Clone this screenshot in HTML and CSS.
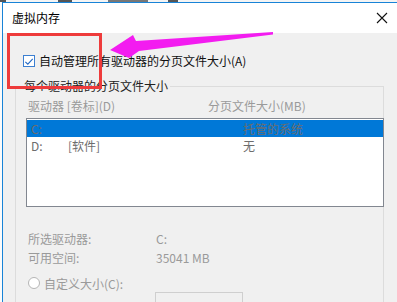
FILE: index.html
```html
<!DOCTYPE html>
<html lang="zh-CN">

<head>
  <meta charset="UTF-8">
  <title>虚拟内存</title>
  <link rel="stylesheet" href="styles.css">
</head>

<body>
  <div class="behind">
    <span class="frag f1"></span>
    <span class="frag f2"></span>
    <span class="frag f3"></span>
    <span class="frag f4"></span>
  </div>

  <div class="dialog">
    <div class="titlebar">
      <span class="title">虚拟内存</span>
      <svg class="close" width="12" height="12" viewBox="0 0 12 12">
        <path d="M1 1 L11 11 M11 1 L1 11" stroke="#111" stroke-width="1.1" fill="none" />
      </svg>
    </div>

    <div class="content">
      <label class="auto">
        <span class="checkbox">
          <svg width="11" height="11" viewBox="0 0 11 11">
            <path d="M1.5 5.8 L4.2 8.4 L9.6 2.6" stroke="#2168c4" stroke-width="1.2" fill="none" />
          </svg>
        </span>
        自动管理所有驱动器的分页文件大小(A)
      </label>

      <fieldset class="group">
        <legend>每个驱动器的分页文件大小</legend>

        <div class="heads">
          <span class="col-drive">驱动器 [卷标](D)</span>
          <span class="col-size">分页文件大小(MB)</span>
        </div>

        <div class="listbox">
          <div class="row selected">
            <span class="c1">C:</span>
            <span class="c2"></span>
            <span class="c3">托管的系统</span>
          </div>
          <div class="row">
            <span class="c1">D:</span>
            <span class="c2">[软件]</span>
            <span class="c3">无</span>
          </div>
        </div>

        <div class="info">
          <div class="info-row"><span class="key">所选驱动器:</span><span>C:</span></div>
          <div class="info-row"><span class="key">可用空间:</span><span>35041 MB</span></div>
        </div>

        <label class="custom">
          <span class="radio"></span>
          自定义大小(C):
        </label>

        <div class="size-row">
          <span class="size-input"></span>
        </div>
      </fieldset>
    </div>
  </div>

  <svg class="marks" width="397" height="302" viewBox="0 0 397 302">
    <rect x="8.5" y="34.5" width="92" height="53" fill="none" stroke="#ee3b3b" stroke-width="3" />
    <polygon points="110,50 133,35 136,41 273,32 273,34.5 139,51 129,58" fill="#f31cf0" />
  </svg>
</body>

</html>
```

FILE: styles.css
```css
* {
  box-sizing: border-box;
  margin: 0;
}

body {
  width: 397px;
  height: 302px;
  overflow: hidden;
  position: relative;
  background-color: #fbfbfb;
  padding-left: 2px;
  font-family: "Noto Sans CJK SC", "Liberation Sans", sans-serif;
  font-size: 12px;
}

.behind {
  height: 2px;
  display: flex;
  margin-left: -2px;
  background-color: #f4f4f4;
}

.frag {
  height: 2px;
  background-color: #555;
}

.f1 { width: 6px; }
.f2 { width: 14px; margin-left: 52px; }
.f3 { width: 40px; margin-left: 36px; background-color: #777; }
.f4 { width: 10px; margin-left: 20px; }

.dialog {
  border-left: 1px solid #1883d7;
  border-top: 1px solid #1883d7;
}

.titlebar {
  height: 30px;
  background-color: #fff;
  display: flex;
  align-items: center;
  justify-content: space-between;
  padding: 0 8px 1px 9px;
  color: #000;
  font-size: 12px;
}

.close {
  margin-right: 1px;
}

.content {
  background-color: #f0f0f0;
  height: 272px;
  overflow: hidden;
  padding-top: 20px;
}

.auto {
  display: flex;
  align-items: center;
  height: 16px;
  padding-left: 20px;
  color: #111;
  line-height: 16px;
}

.checkbox {
  width: 12px;
  height: 12px;
  border: 1px solid #3c7fd1;
  background-color: #fff;
  margin-right: 4px;
  display: flex;
  align-items: center;
  justify-content: center;
}

.group {
  margin: 9px 0 0 12px;
  width: 369px;
  border: 1px solid #dcdcdc;
  padding: 0 0 0 10px;
  min-width: 0;
}

.group legend {
  margin-left: -4px;
  padding: 0 2px;
  line-height: 16px;
  color: #222;
}

.heads {
  display: flex;
  height: 18px;
  margin-top: 3px;
  padding-left: 2px;
  color: #9a9a9a;
  line-height: 18px;
}

.col-drive {
  width: 180px;
}

.listbox {
  margin-top: 3px;
  height: 89px;
  margin-right: -1px;
  border: 1px solid #828790;
  background-color: #fff;
  padding-top: 1px;
}

.row {
  display: flex;
  height: 17px;
  line-height: 17px;
  padding-left: 4px;
  color: #6d6d6d;
}

.row.selected {
  background-color: #0078d7;
}

.c1 {
  width: 37px;
}

.c2 {
  width: 175px;
}

.info {
  margin-top: 22px;
  padding-left: 2px;
  color: #9a9a9a;
}

.info-row {
  display: flex;
  height: 19px;
  line-height: 19px;
}

.key {
  width: 128px;
}

.custom {
  display: flex;
  align-items: center;
  margin-top: 9px;
  padding-left: 2px;
  height: 14px;
  color: #9a9a9a;
}

.radio {
  width: 12px;
  height: 12px;
  border: 1px solid #b5b5b5;
  border-radius: 50%;
  background-color: #fff;
  margin-right: 4px;
}

.size-row {
  padding-left: 129px;
  margin-top: 2px;
}

.size-input {
  display: block;
  width: 88px;
  height: 20px;
  border: 1px solid #cfcfcf;
  background-color: #f0f0f0;
}

.marks {
  position: absolute;
  left: 0;
  top: 0;
}
```
